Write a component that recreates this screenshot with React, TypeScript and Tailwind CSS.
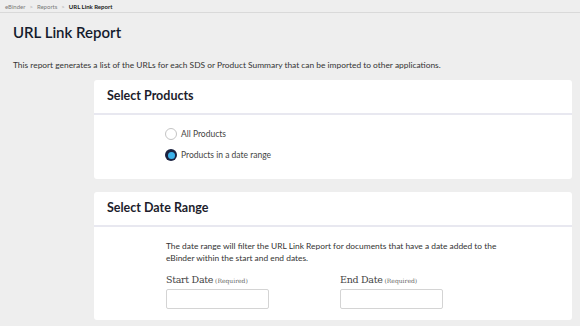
import React, { useState } from "react";

const Crumb = ({ label, last }: { label: string; last?: boolean }) => (
  <span className={last ? "font-bold text-[#222]" : "text-[#7a7a7a]"}>{label}</span>
);

const Chevron = () => <span className="text-[#b0b0b0] px-[4px]">&gt;</span>;

const Radio = ({
  label,
  checked,
  onClick,
}: {
  label: string;
  checked: boolean;
  onClick: () => void;
}) => (
  <button type="button" onClick={onClick} className="flex items-center h-[14px] gap-[4px] text-left">
    {checked ? (
      <span className="w-[12px] h-[12px] rounded-full bg-[#1b2240] flex items-center justify-center">
        <span className="w-[7px] h-[7px] rounded-full bg-[#3db2ea]" />
      </span>
    ) : (
      <span className="w-[12px] h-[12px] rounded-full border border-[#c4c4c4] bg-white" />
    )}
    <span className="text-[8.5px] text-[#444]">{label}</span>
  </button>
);

const Card = ({ title, children }: { title: string; children: React.ReactNode }) => (
  <div className="bg-white rounded-[3px]">
    <div className="h-[35px] px-[13px] flex items-center border-b-2 border-[#e8e8f0]">
      <h2 className="text-[12.5px] font-bold text-[#1d1d2c]">{title}</h2>
    </div>
    {children}
  </div>
);

const DateField = ({ label }: { label: string }) => (
  <div className="w-[174px]">
    <label className="flex items-baseline h-[12px] leading-[12px] mb-[3px] text-[#444] font-['DejaVu_Serif',serif]">
      <span className="text-[9.5px] tracking-[-0.3px]">{label}</span>
      <span className="text-[6px] text-[#666] ml-[2px]">(Required)</span>
    </label>
    <input type="text" className="block w-[103px] h-[20px] border border-[#d4d4d4] rounded-[2px] outline-none px-1 text-[9px]" />
  </div>
);

export default function App() {
  const [mode, setMode] = useState("range");

  return (
    <div className="min-h-[326px] bg-[#eeeeee] font-['Lato',sans-serif] text-[#2a2a35] overflow-hidden">
      <div className="h-[13px] px-[5px] flex items-center text-[6px] border-b border-[#d9d9d9]">
        <Crumb label="eBinder" />
        <Chevron />
        <Crumb label="Reports" />
        <Chevron />
        <Crumb label="URL Link Report" last />
      </div>

      <h1 className="px-[13px] pt-[8px] text-[15px] leading-[22px] font-semibold text-[#141b2d]">URL Link Report</h1>

      <p className="px-[13px] mt-[16px] text-[8.4px] leading-[12px] text-[#333]">
        This report generates a list of the URLs for each SDS or Product Summary that can be imported to other
        applications.
      </p>

      <div className="ml-[94px] mr-[8px] mt-[9px] flex flex-col gap-[13px]">
        <Card title="Select Products">
          <div className="pl-[71px] pt-[12px] pb-[17px] flex flex-col gap-[7px]">
            <Radio label="All Products" checked={mode === "all"} onClick={() => setMode("all")} />
            <Radio label="Products in a date range" checked={mode === "range"} onClick={() => setMode("range")} />
          </div>
        </Card>

        <Card title="Select Date Range">
          <div className="pl-[72px] pt-[13px] pb-[11px] w-[420px]">
            <p className="text-[8.4px] leading-[12px] text-[#333] w-[348px]">
              The date range will filter the URL Link Report for documents that have a date added to the eBinder
              within the start and end dates.
            </p>
            <div className="flex mt-[10px]">
              <DateField label="Start Date" />
              <DateField label="End Date" />
            </div>
          </div>
        </Card>
      </div>
    </div>
  );
}
